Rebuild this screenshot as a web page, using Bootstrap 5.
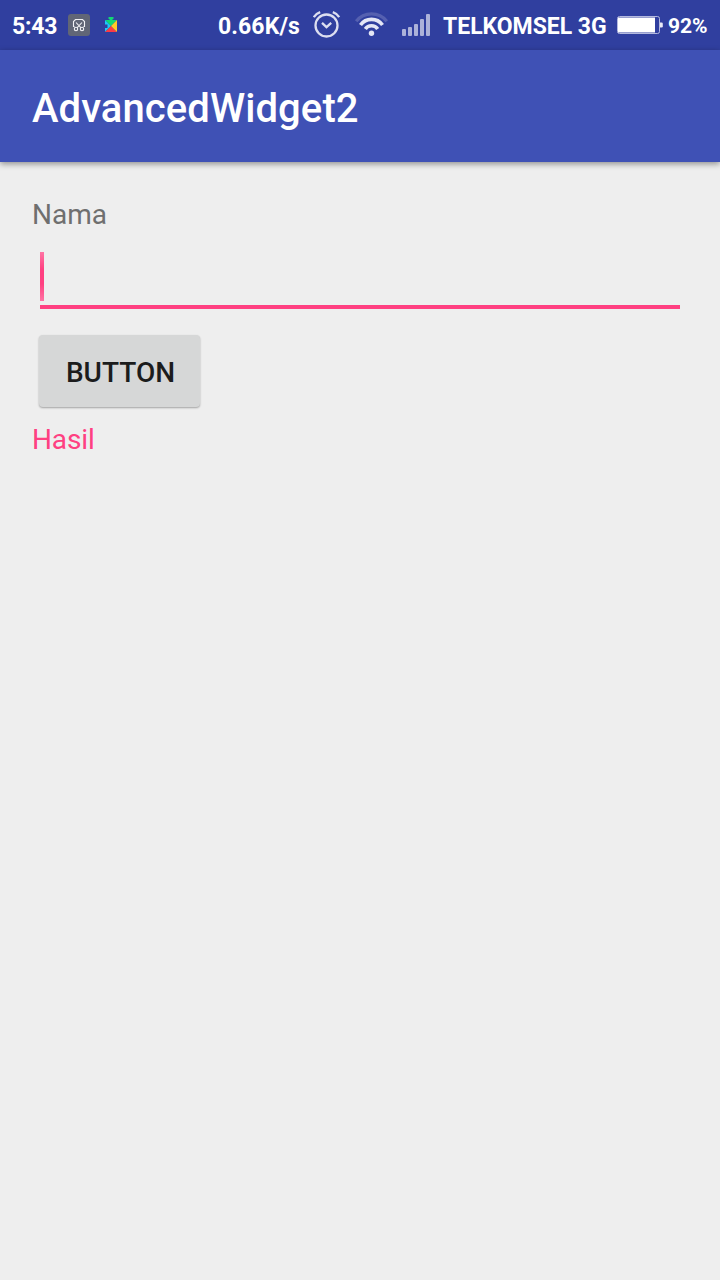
<!DOCTYPE html>
<html lang="id">
<head>
<meta charset="utf-8">
<meta name="viewport" content="width=device-width, initial-scale=1">
<title>AdvancedWidget2</title>
<link href="https://cdn.jsdelivr.net/npm/bootstrap@5.3.0/dist/css/bootstrap.min.css" rel="stylesheet">
<style>
body{font-family:Roboto,"Noto Sans",sans-serif;background:#eee;min-height:1280px}
.statusbar{height:50px;background:#303f9f;font-size:23px;font-weight:700;line-height:50px;padding:0 12px}
.statusbar svg{flex:none;display:block}
.statusbar span{white-space:nowrap;height:50px;padding-top:2px}
.clock{width:56px;letter-spacing:-.2px}
.speed{width:95px;letter-spacing:.1px}
.carrier{width:174px;letter-spacing:-.03px}
.statusbar .percent{width:40px;font-size:21px;letter-spacing:-.1px;padding-top:1px}
.appbar{height:112px;background:#3f51b5;padding:5px 32px 0;box-shadow:0 2px 6px rgba(0,0,0,.4)}
.title{font-size:40px;font-weight:500;line-height:48px;letter-spacing:.08px}
.form-area{padding:34px 32px 0}
.label-text{font-size:28px;line-height:38px;color:#6f6f6f}
.field{height:57px;margin:18px 8px 0;border-bottom:4px solid #ff4081}
.field input{width:100%;height:49px;border:0;background:none;outline:0;caret-color:transparent;font-size:36px;padding:0}
.caret{width:4px;height:49px;flex:none;background:linear-gradient(#ff74a4,#ff4081 35%,#ff4081 65%,#ff74a4)}
.btn-grey,.btn-grey:hover{display:block;background:#d6d7d7;color:#1c1c1c;border:0;border-radius:4px;width:161px;height:72px;font-size:28px;font-weight:500;padding:3px 0 0 2px;box-shadow:0 1px 2px rgba(0,0,0,.32);margin:26px 0 0 7px}
.result-text{font-size:28px;line-height:38px;letter-spacing:-.1px;margin-top:14px;color:#ff4081}
</style>
</head>
<body>
<header class="statusbar d-flex align-items-center justify-content-between text-white">
<div class="d-flex align-items-center">
<span class="clock">5:43</span>
<svg width="22" height="50" viewBox="68 0 22 50"><rect x="68" y="14" width="22" height="22" rx="3" fill="#616676"/><g fill="none" stroke="#f2f2f5" stroke-width="1.100"><path d="M74.500 26.500h-1v-5l2-2h7l2 2v5h-1M76 22.500l4.800 5.200M82 22.500l-4.800 5.200"/><circle cx="76" cy="29" r="1.700"/><circle cx="82" cy="29" r="1.700"/></g></svg>
<svg class="ms-3" width="14" height="50" viewBox="106 0 14 50" overflow="visible"><path d="M105 20h4.500v-1h-1v-2h5v2h-1v1H117l-6 6z" fill="#11d873"/><path d="M105 20l6 6-6 6v-4h2.500v-3.500H105z" fill="#1cc8f5"/><path d="M105 32l6-6 6 6z" fill="#f93b45"/><path d="M117 20v12l-6-6z" fill="#ffc928"/></svg>
</div>
<div class="d-flex align-items-center">
<span class="speed">0.66K/s</span>
<svg width="28" height="50" viewBox="313 0 28 50" fill="none" stroke="#dcdef0" stroke-width="2.300"><circle cx="326.500" cy="25.500" r="11"/><path d="M322 22.800l4.500 4.300 4.700-4.300M313.800 17.200q2.200-3.500 6.400-5M339.200 17.200q-2.200-3.500-6.400-5"/></svg>
<svg width="47" height="50" viewBox="341 0 47 50" fill="none" stroke="#e4e6f5" stroke-width="3.600"><path d="M356.200 21.300a19.500 19.500 0 0 1 30.600 0" stroke="#5560b0" stroke-width="3.200"/><path d="M360.500 25a13.500 13.500 0 0 1 22 0M365.300 29a7.500 7.500 0 0 1 12.400 0"/><circle cx="371.500" cy="33.300" r="2.700" fill="#e4e6f5" stroke="none"/></svg>
<svg width="55" height="50" viewBox="388 0 55 50" fill="#acb2d9"><rect x="402" y="29" width="4" height="7" rx="1"/><rect x="408" y="27" width="4" height="9" rx="1"/><rect x="414" y="24" width="4" height="12" rx="1"/><rect x="420" y="19" width="4" height="17" rx="1"/><rect x="426" y="14" width="4" height="22" rx="1"/></svg>
<span class="carrier">TELKOMSEL 3G</span>
<svg width="51" height="50" viewBox="617 0 51 50"><rect x="617.500" y="16.500" width="42" height="17" rx="2" fill="none" stroke="#b4b9df"/><path d="M618 17.500H655v15h-37z" fill="#fff"/><path d="M660 22.500h1.500q1.300 0 1.300 1.300v2.400q0 1.300-1.300 1.300H660z" fill="#e8eaf6"/></svg>
<span class="percent">92%</span>
</div>
</header>
<nav class="appbar d-flex align-items-center text-white"><span class="title">AdvancedWidget2</span></nav>
<main class="form-area">
<label class="label-text d-block" for="nama">Nama</label>
<div class="field d-flex"><div class="caret"></div><input id="nama" type="text"></div>
<button class="btn btn-grey" type="button">BUTTON</button>
<div class="result-text">Hasil</div>
</main>
<script src="https://cdn.jsdelivr.net/npm/bootstrap@5.3.0/dist/js/bootstrap.bundle.min.js"></script>
</body>
</html>
